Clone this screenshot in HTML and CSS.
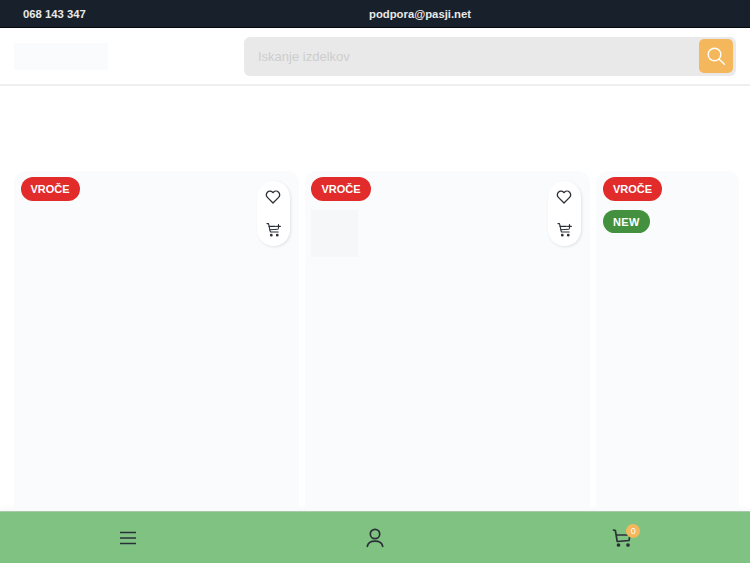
FILE: index.html
```html
<!DOCTYPE html>
<html lang="sl">
<head>
<meta charset="utf-8">
<title>Pasji</title>
<link rel="stylesheet" href="styles.css">
</head>
<body>
<div class="topbar">
  <span class="phone">068 143 347</span>
  <span class="mail">podpora@pasji.net</span>
</div>
<header class="header">
  <div class="logo"></div>
  <div class="search">
    <span class="placeholder">Iskanje izdelkov</span>
    <button class="search-btn" aria-label="Iskanje">
      <svg width="20" height="20" viewBox="0 0 20 20" fill="none" stroke="#fff" stroke-width="1.4" stroke-linecap="round"><circle cx="8.5" cy="8.5" r="6.3"/><path d="M13.2 13.2 18.4 18.2"/></svg>
    </button>
  </div>
</header>
<main class="products">
  <article class="card card-first">
    <div class="badges"><span class="badge hot">VROČE</span></div>
    <div class="actions">
      <svg width="16" height="16" viewBox="0 0 24 24" fill="none" stroke="#2b2f36" stroke-width="2" stroke-linejoin="round"><path d="M12 21 3.6 12.6a5.5 5.5 0 0 1 0-7.8 5.5 5.5 0 0 1 7.8 0l.6.7.6-.7a5.5 5.5 0 0 1 7.8 7.8Z"/></svg>
      <svg width="15" height="15" viewBox="0 0 24 24" fill="none" stroke="#2b2f36" stroke-width="1.8" stroke-linecap="round" stroke-linejoin="round"><path d="M1.5 2.5H4l3 13.5h12.5"/><path d="M5 7h10M6.2 12.5 19 11.5"/><path d="M20 4v6M17 7h6"/><circle cx="8.5" cy="21" r="1.3" fill="#2b2f36"/><circle cx="18" cy="21" r="1.3" fill="#2b2f36"/></svg>
    </div>
  </article>
  <article class="card card-mid">
    <div class="badges">
      <span class="badge hot">VROČE</span>
      <div class="thumb"></div>
    </div>
    <div class="actions">
      <svg width="16" height="16" viewBox="0 0 24 24" fill="none" stroke="#2b2f36" stroke-width="2" stroke-linejoin="round"><path d="M12 21 3.6 12.6a5.5 5.5 0 0 1 0-7.8 5.5 5.5 0 0 1 7.8 0l.6.7.6-.7a5.5 5.5 0 0 1 7.8 7.8Z"/></svg>
      <svg width="15" height="15" viewBox="0 0 24 24" fill="none" stroke="#2b2f36" stroke-width="1.8" stroke-linecap="round" stroke-linejoin="round"><path d="M1.5 2.5H4l3 13.5h12.5"/><path d="M5 7h10M6.2 12.5 19 11.5"/><path d="M20 4v6M17 7h6"/><circle cx="8.5" cy="21" r="1.3" fill="#2b2f36"/><circle cx="18" cy="21" r="1.3" fill="#2b2f36"/></svg>
    </div>
  </article>
  <article class="card card-last">
    <div class="badges">
      <span class="badge hot">VROČE</span>
      <span class="badge new">NEW</span>
    </div>
  </article>
</main>
<nav class="bottom">
  <svg width="18" height="14" viewBox="0 0 18 14" fill="none" stroke="#2a3038" stroke-width="1.7"><path d="M1 1.500h16M1 7h16M1 12.500h16"/></svg>
  <svg width="20" height="20" viewBox="0 0 20 20" fill="none" stroke="#2a3038" stroke-width="1.7" stroke-linecap="round"><circle cx="10" cy="6" r="4.7"/><path d="M2.300 18.300C3 15 6 13.200 10 13.200s7 1.800 7.700 5.100"/></svg>
  <div class="cart">
    <svg width="20" height="20" viewBox="0 0 20 20" fill="none" stroke="#2a3038" stroke-width="1.7" stroke-linecap="round" stroke-linejoin="round"><path d="M1.500 2 3.400 2.600 5.200 13.500 17 12.500 18 7H4.200"/><circle cx="6.500" cy="17" r="1" fill="#2a3038"/><circle cx="16" cy="17" r="1" fill="#2a3038"/></svg>
    <span class="count">0</span>
  </div>
</nav>
</body>
</html>
```
FILE: styles.css
```css
* { box-sizing: border-box; }
html, body { margin: 0; height: 100%; }
body {
  width: 750px;
  height: 563px;
  overflow: hidden;
  background: #fff;
  font-family: "Liberation Sans", Arial, sans-serif;
  display: flex;
  flex-direction: column;
}
.topbar {
  height: 28px;
  flex: none;
  background: #18212b;
  border-bottom: 1px solid #05080b;
  color: #e8e8e8;
  font-size: 11.3px;
  font-weight: 700;
  display: grid;
  grid-template-columns: 346px auto;
  align-items: center;
  padding-left: 23px;
}
.header {
  height: 58px;
  flex: none;
  border-bottom: 2px solid #efefef;
  display: flex;
  align-items: flex-start;
  justify-content: space-between;
  padding: 9px 14px 0;
}
.logo {
  width: 94px;
  height: 27px;
  margin-top: 6px;
  background: #fafbfd;
}
.search {
  width: 492px;
  height: 39px;
  background: #e9e9e9;
  border-radius: 6px;
  display: flex;
  align-items: center;
  justify-content: space-between;
  padding: 0 3px 0 14px;
}
.placeholder { color: #cdcdcd; font-size: 13px; }
.search-btn {
  width: 34px;
  height: 34px;
  margin-bottom: 1px;
  border: 0;
  padding: 0;
  border-radius: 5px;
  background: #f5b75b;
  display: flex;
  align-items: center;
  justify-content: center;
}
.products {
  flex: 1;
  display: flex;
  gap: 6px;
  padding: 85px 11px 0 14px;
  min-height: 0;
}
.card {
  position: relative;
  background: #fafbfd;
  border-radius: 12px 12px 0 0;
  padding: 6px 6.5px;
}
.card-first { width: 284.9px; flex: none; }
.card-mid { width: 285.1px; flex: none; }
.card-last { flex: 1; padding-left: 7px; }
.badges {
  display: flex;
  flex-direction: column;
  align-items: flex-start;
  gap: 9px;
}
.badge {
  height: 24px;
  border-radius: 12px;
  color: #fff;
  font-size: 11px;
  font-weight: 700;
  display: flex;
  align-items: center;
  padding: 0 10px;
}
.hot { background: #e22b2b; }
.new { background: #43913f; height: 23px; letter-spacing: .4px; }
.thumb {
  width: 47px;
  height: 47px;
  background: #f6f7f8;
}
.actions {
  position: absolute;
  top: 10px;
  right: 9px;
  width: 33px;
  height: 65px;
  background: #fff;
  border-radius: 17px;
  box-shadow: 1px 1px 3px rgba(0, 0, 0, .1);
  display: flex;
  flex-direction: column;
  align-items: center;
  justify-content: space-between;
  padding: 8px 0 9px;
}
.bottom {
  height: 52px;
  flex: none;
  background: #80c282;
  border-top: 1px solid #a9c9aa;
  box-shadow: 0 -2px 6px rgba(0, 0, 0, .04);
  display: grid;
  grid-template-columns: repeat(3, 1fr);
  justify-items: center;
  align-items: center;
  padding: 0 4px;
}
.cart { position: relative; display: flex; }
.count {
  position: absolute;
  top: -4px;
  right: -8px;
  width: 14px;
  height: 14px;
  border-radius: 50%;
  background: #f5b75b;
  color: #fff;
  font-size: 9px;
  line-height: 14px;
  text-align: center;
}
```
